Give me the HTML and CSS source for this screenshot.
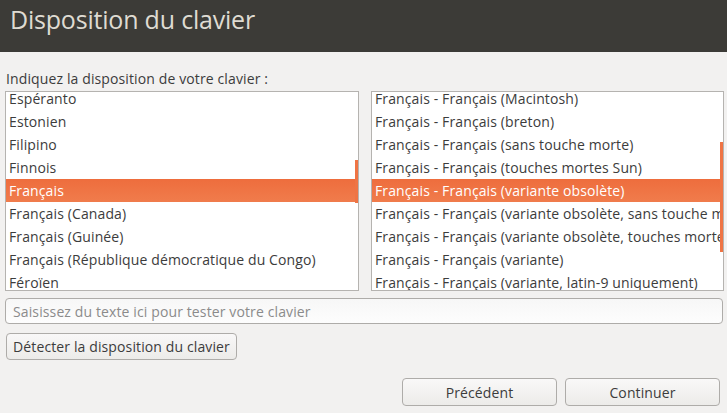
FILE: index.html
```html
<!DOCTYPE html>
<html lang="fr">
<head>
<meta charset="utf-8">
<title>Disposition du clavier</title>
<link rel="stylesheet" href="styles.css">
</head>
<body>
<header class="header"><h1 class="title">Disposition du clavier</h1></header>
<main class="content">
  <p class="label">Indiquez la disposition de votre clavier :</p>
  <div class="lists">
    <div class="list list-left">
      <ul class="rows">
        <li>Espéranto</li>
        <li>Estonien</li>
        <li>Filipino</li>
        <li>Finnois</li>
        <li class="sel">Français</li>
        <li>Français (Canada)</li>
        <li>Français (Guinée)</li>
        <li>Français (République démocratique du Congo)</li>
        <li>Féroïen</li>
      </ul>
      <span class="thumb thumb-left"></span>
    </div>
    <div class="list list-right">
      <ul class="rows">
        <li>Français - Français (Macintosh)</li>
        <li>Français - Français (breton)</li>
        <li>Français - Français (sans touche morte)</li>
        <li>Français - Français (touches mortes Sun)</li>
        <li class="sel">Français - Français (variante obsolète)</li>
        <li>Français - Français (variante obsolète, sans touche morte)</li>
        <li>Français - Français (variante obsolète, touches mortes Sun)</li>
        <li>Français - Français (variante)</li>
        <li>Français - Français (variante, latin-9 uniquement)</li>
      </ul>
      <span class="thumb thumb-right"></span>
    </div>
  </div>
  <input class="entry" type="text" placeholder="Saisissez du texte ici pour tester votre clavier">
  <div class="detect-row"><button class="btn btn-detect">Détecter la disposition du clavier</button></div>
  <div class="nav">
    <button class="btn btn-nav">Précédent</button>
    <button class="btn btn-nav">Continuer</button>
  </div>
</main>
</body>
</html>
```
FILE: styles.css
```css
* { box-sizing: border-box; }
html, body { margin: 0; padding: 0; }
body {
  width: 727px;
  height: 413px;
  overflow: hidden;
  background: #f2f1f0;
  font-family: "Open Sans", "Noto Sans", sans-serif;
  font-size: 14px;
  letter-spacing: 0.12px;
  color: #3c3c3c;
}
.header {
  height: 52px;
  background: #3c3b37;
  padding: 4px 0 0 10px;
}
.title {
  margin: 0;
  font-weight: 400;
  font-size: 25px;
  line-height: 30px;
  color: #dfdbd2;
  letter-spacing: -0.2px;
}
.content {
  padding: 0 3px 0 5px;
  display: flex;
  flex-direction: column;
}
.label {
  margin: 16px 0 0 1px;
  line-height: 22px;
  height: 22px;
}
.lists {
  display: flex;
  gap: 12px;
  margin-top: 1px;
}
.list {
  position: relative;
  height: 200px;
  background: #fff;
  border: 1px solid #b5b3b0;
  overflow: hidden;
}
.list-left { width: 354px; }
.list-right { width: 353px; }
.rows {
  list-style: none;
  margin: -5px 0 0 0;
  padding: 0;
}
.rows li {
  height: 23px;
  line-height: 22px;
  padding: 1px 0 0 3px;
  white-space: nowrap;
  overflow: hidden;
}
.rows li.sel {
  background: linear-gradient(#ee6d3d, #f07c4c);
  color: #fff;
  margin-right: 1px;
}
.thumb {
  position: absolute;
  right: 0;
  width: 3px;
  background: #ef7444;
}
.thumb-left { top: 68px; height: 43px; }
.thumb-right { top: 50px; height: 110px; }
.entry {
  margin-top: 7px;
  width: 718px;
  height: 26px;
  border: 1px solid #aeaca9;
  border-radius: 4px;
  background: linear-gradient(#f7f7f7, #fdfdfd);
  font-family: inherit;
  font-size: 14px;
  letter-spacing: 0.12px;
  padding: 0 7px;
  color: #3c3c3c;
}
.entry::placeholder { color: #8b8b8b; }
.detect-row {
  margin-top: 9px;
  display: flex;
}
.btn {
  font-family: inherit;
  font-size: 14px;
  letter-spacing: 0.12px;
  color: #3c3c3c;
  border: 1px solid #aeaca9;
  border-radius: 4px;
  background: linear-gradient(#f9f8f8, #ecebe9);
  padding: 0;
}
.btn-detect {
  margin-left: 1px;
  width: 231px;
  height: 27px;
}
.nav {
  margin-top: 18px;
  display: flex;
  justify-content: flex-end;
  gap: 8px;
  padding-right: 4px;
}
.btn-nav {
  width: 155px;
  height: 28px;
}
```
